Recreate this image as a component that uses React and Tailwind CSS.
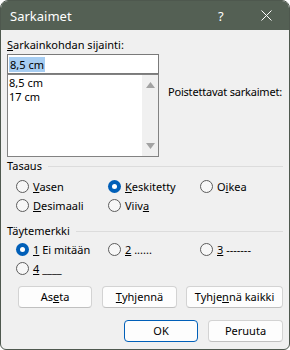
import React from 'react'

function Radio({ checked }) {
    return checked ? (
        <span className="w-[13px] h-[13px] rounded-full bg-[#005fb8] flex items-center justify-center shrink-0">
            <span className="w-[5px] h-[5px] rounded-full bg-white" />
        </span>
    ) : (
        <span className="w-[13px] h-[13px] rounded-full border border-[#5c5c5c] bg-[#f7f7f7] shrink-0" />
    )
}

function Option({ checked, children, className = '' }) {
    return (
        <div className={`flex items-center gap-[4px] h-[19px] ${className}`}>
            <Radio checked={checked} />
            <span className="leading-[16px] whitespace-pre">{children}</span>
        </div>
    )
}

function Section({ title }) {
    return (
        <div className="flex items-center h-[16px]">
            <span className="leading-[16px]">{title}</span>
            <span className="flex-1 h-px bg-[#dcdcdc] ml-[6px]" />
        </div>
    )
}

function Button({ children, className = '', primary }) {
    return (
        <div className={`h-[22px] flex items-center justify-center rounded-[4px] bg-[#fdfdfd] border ${primary ? 'border-[#005fb8]' : 'border-[#d3d3d3] border-b-[#c0c0c0]'} ${className}`}>
            {children}
        </div>
    )
}

export default function App() {
    return (
        <div className="w-[290px] h-[350px] bg-[#f0f0f0] rounded-t-[8px] rounded-b-[6px] border border-[#4e584e] overflow-hidden flex flex-col font-['Segoe_UI','Noto_Sans',sans-serif] text-[11px] text-black">
            <div className="h-[29px] bg-[#546054] flex items-center text-white shrink-0">
                <span className="pl-[9px] flex-1 leading-[16px] text-[13px]">Sarkaimet</span>
                <span className="w-[10px] leading-[16px] text-[13px] mr-[33px]">?</span>
                <svg width="11" height="11" viewBox="0 0 11 11" className="mr-[17px]">
                    <path d="M0.5 0.5 L10.5 10.5 M10.5 0.5 L0.5 10.5" stroke="#ffffff" strokeWidth="1" />
                </svg>
            </div>
            <div className="flex flex-col px-[6px]">
                <div className="mt-[7px] leading-[16px]"><u>S</u>arkainkohdan sijainti:</div>
                <div className="flex items-start mt-[1px]">
                    <div className="flex flex-col w-[152px] shrink-0">
                        <div className="h-[20px] border border-[#7a7a7a] bg-white flex items-center px-[1px]">
                            <span className="bg-[#a6cdf2] leading-[15px] px-[1px]">8,5 cm</span>
                        </div>
                        <div className="h-[83px] border border-[#828282] bg-white flex">
                            <div className="flex-1 pl-[1px] pt-[1px] leading-[14px]">
                                <div>8,5 cm</div>
                                <div>17 cm</div>
                            </div>
                            <div className="w-[16px] bg-[#f0f0f0] flex flex-col items-center justify-between py-[7px]">
                                <svg width="9" height="6" viewBox="0 0 9 6"><path d="M4.5 0 L9 6 L0 6 Z" fill="#a3a3a3" /></svg>
                                <svg width="9" height="6" viewBox="0 0 9 6"><path d="M0 0 L9 0 L4.5 6 Z" fill="#a3a3a3" /></svg>
                            </div>
                        </div>
                    </div>
                    <div className="ml-[9px] mt-[30px] leading-[16px] whitespace-nowrap tracking-[-0.2px]">Poistettavat sarkaimet:</div>
                </div>
                <div className="mt-[1px]">
                    <Section title="Tasaus" />
                </div>
                <div className="grid grid-cols-[92px_92px_1fr] pl-[9px] mt-[3px]">
                    <Option><u>V</u>asen</Option>
                    <Option checked><u>K</u>eskitetty</Option>
                    <Option>O<u>i</u>kea</Option>
                    <Option><u>D</u>esimaali</Option>
                    <Option>Viiv<u>a</u></Option>
                </div>
                <div className="mt-[8px]">
                    <Section title="Täytemerkki" />
                </div>
                <div className="grid grid-cols-[92px_92px_1fr] pl-[9px] mt-[1px]">
                    <Option checked><u>1</u> Ei mitään</Option>
                    <Option><u>2</u> ......</Option>
                    <Option><u>3</u> -------</Option>
                    <Option><u>4</u> ____</Option>
                </div>
                <div className="flex mt-[8px] pl-[11px]">
                    <Button className="w-[74px]">As<u>e</u>ta</Button>
                    <Button className="w-[75px] ml-[10px]"><u>T</u>yhjennä</Button>
                    <Button className="w-[97px] ml-[9px]">Tyhje<u>n</u>nä kaikki</Button>
                </div>
                <div className="flex justify-end gap-[10px] mt-[12px]">
                    <Button primary className="w-[74px]">OK</Button>
                    <Button className="w-[75px]">Peruuta</Button>
                </div>
            </div>
        </div>
    )
}
